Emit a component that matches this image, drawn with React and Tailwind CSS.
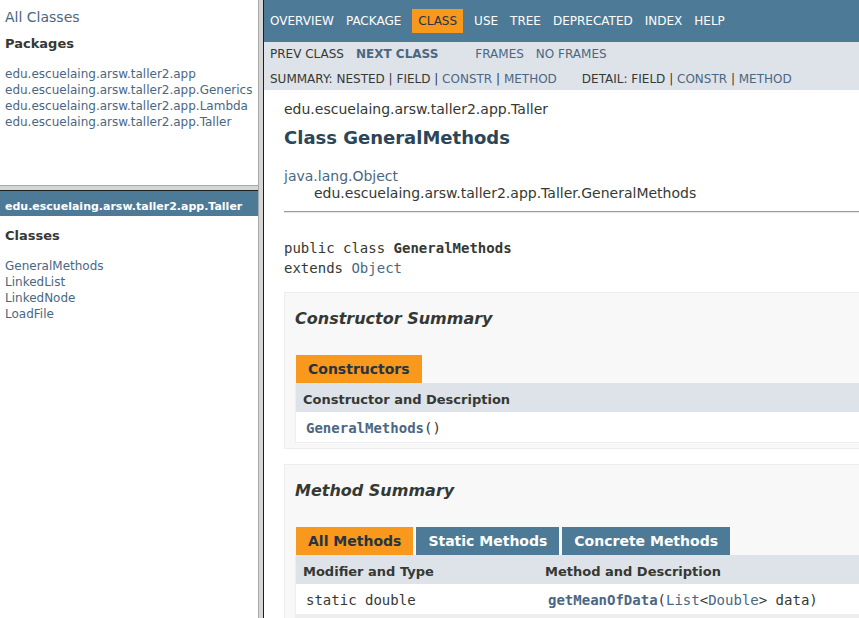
export default function App() {
  return (
    <div className="flex h-[618px] w-[859px] overflow-hidden bg-white font-['DejaVu_Sans',Arial,sans-serif] text-[#353833]">
      {/* Left frames */}
      <div className="flex w-[258px] shrink-0 flex-col">
        <div className="h-[185px] shrink-0 pl-[5px]">
          <div className="pt-[9px] text-[14px] leading-[17px] text-[#4A6782]">All Classes</div>
          <div className="mt-[10px] text-[13px] font-bold leading-[16px]">Packages</div>
          <ul className="mt-[14px] whitespace-nowrap text-[12px] leading-[16px] text-[#4A6782]">
            <li>edu.escuelaing.arsw.taller2.app</li>
            <li>edu.escuelaing.arsw.taller2.app.Generics</li>
            <li>edu.escuelaing.arsw.taller2.app.Lambda</li>
            <li>edu.escuelaing.arsw.taller2.app.Taller</li>
          </ul>
        </div>
        <div className="h-[1px] shrink-0 bg-[#a8a8a8]" />
        <div className="h-[4px] shrink-0 bg-[#d6d6d6]" />
        <div className="h-[1px] shrink-0 bg-[#1e1e1e]" />
        <div className="flex-1">
          <div className="h-[25px] overflow-hidden whitespace-nowrap bg-[#4D7A97] pl-[5px] pt-[9px] text-[11px] font-bold leading-[13px] text-white">
            edu.escuelaing.arsw.taller2.app.Taller
          </div>
          <div className="mt-[12px] pl-[5px] text-[13px] font-bold leading-[16px]">Classes</div>
          <ul className="mt-[14px] pl-[5px] text-[12px] leading-[16px] text-[#4A6782]">
            <li>GeneralMethods</li>
            <li>LinkedList</li>
            <li>LinkedNode</li>
            <li>LoadFile</li>
          </ul>
        </div>
      </div>

      {/* Frame separator */}
      <div className="w-[1px] shrink-0 bg-[#a8a8a8]" />
      <div className="w-[4px] shrink-0 bg-[#d6d6d6]" />
      <div className="w-[1px] shrink-0 bg-[#1e1e1e]" />

      {/* Right frame */}
      <div className="flex-1 overflow-hidden">
        <div className="w-[760px]">
          {/* Top nav */}
          <div className="h-[42px] bg-[#4D7A97] pt-[9px]">
            <ul className="flex text-[12px] leading-[14px] text-white">
              <li className="px-[6px] py-[5px]">OVERVIEW</li>
              <li className="px-[6px] py-[5px]">PACKAGE</li>
              <li className="mx-[5px] bg-[#F8981D] px-[6px] py-[5px] text-[#253441]">CLASS</li>
              <li className="px-[6px] py-[5px]">USE</li>
              <li className="px-[6px] py-[5px]">TREE</li>
              <li className="px-[6px] py-[5px]">DEPRECATED</li>
              <li className="px-[6px] py-[5px]">INDEX</li>
              <li className="px-[6px] py-[5px]">HELP</li>
            </ul>
          </div>

          {/* Sub nav */}
          <div className="h-[48px] bg-[#dee3e9] text-[12px] leading-[14px]">
            <div className="flex">
              <ul className="mr-[25px] flex">
                <li className="px-[6px] py-[5px]">PREV CLASS</li>
                <li className="px-[6px] py-[5px] font-bold text-[#4A6782]">NEXT CLASS</li>
              </ul>
              <ul className="flex text-[#4A6782]">
                <li className="px-[6px] py-[5px]">FRAMES</li>
                <li className="px-[6px] py-[5px]">NO FRAMES</li>
              </ul>
            </div>
            <div className="flex whitespace-pre pl-[6px] pt-[6px]">
              <div className="mr-[25px]">
                SUMMARY: NESTED | FIELD | <span className="text-[#4A6782]">CONSTR</span> | <span className="text-[#4A6782]">METHOD</span>
              </div>
              <div>
                DETAIL: FIELD | <span className="text-[#4A6782]">CONSTR</span> | <span className="text-[#4A6782]">METHOD</span>
              </div>
            </div>
          </div>

          {/* Content */}
          <div className="px-[20px]">
            <div className="mt-[11px] text-[14px] leading-[17px]">edu.escuelaing.arsw.taller2.app.Taller</div>
            <h2 className="mt-[9px] text-[18px] font-bold leading-[22px] text-[#2c4557]">Class GeneralMethods</h2>
            <div className="mt-[19px] text-[14px] leading-[17px]">
              <div className="text-[#4A6782]">java.lang.Object</div>
              <div className="pl-[30px]">edu.escuelaing.arsw.taller2.app.Taller.GeneralMethods</div>
            </div>
            <div className="mt-[9px] h-[2px] border-t border-b border-t-[#9a9a9a] border-b-[#e8e8e8]" />
            <pre className="mt-[25px] font-['DejaVu_Sans_Mono',monospace] text-[14px] leading-[20px]">
              public class <b>GeneralMethods</b>
              {"\n"}extends <span className="text-[#4A6782]">Object</span>
            </pre>

            {/* Constructor summary */}
            <div className="mt-[14px] border border-[#ededed] bg-[#f8f8f8] pb-[5px] pl-[10px] pr-[20px]">
              <h3 className="mt-[15px] text-[16px] font-bold italic leading-[22px]">Constructor Summary</h3>
              <div className="mt-[25px]">
                <div className="flex pl-[1px]">
                  <span className="flex h-[28px] items-center bg-[#F8981D] px-[12px] text-[14px] font-bold text-[#253441]">
                    Constructors
                  </span>
                </div>
                <div className="border-x border-b border-[#eeeeee]">
                  <div className="bg-[#dee3e9] pb-[3px] pl-[7px] pt-[8px] text-[13px] font-bold leading-[18px]">
                    Constructor and Description
                  </div>
                  <div className="bg-white pb-[4px] pl-[10px] pt-[6px] font-['DejaVu_Sans_Mono',monospace] text-[14px] leading-[20px]">
                    <span className="font-bold text-[#4A6782]">GeneralMethods</span>()
                  </div>
                </div>
              </div>
            </div>

            {/* Method summary */}
            <div className="mt-[15px] border border-[#ededed] bg-[#f8f8f8] pb-[5px] pl-[10px] pr-[20px]">
              <h3 className="mt-[15px] text-[16px] font-bold italic leading-[22px]">Method Summary</h3>
              <div className="mt-[25px]">
                <div className="flex pl-[1px] text-[14px] font-bold">
                  <span className="mr-[3px] flex h-[28px] items-center bg-[#F8981D] px-[12px] text-[#253441]">All Methods</span>
                  <span className="mr-[3px] flex h-[28px] items-center bg-[#4D7A97] px-[12px] text-white">Static Methods</span>
                  <span className="mr-[3px] flex h-[28px] items-center bg-[#4D7A97] px-[12px] text-white">Concrete Methods</span>
                </div>
                <div className="border-x border-b border-[#eeeeee]">
                  <div className="flex bg-[#dee3e9] pb-[3px] pt-[8px] text-[13px] font-bold leading-[18px]">
                    <div className="w-[242px] pl-[7px]">Modifier and Type</div>
                    <div className="pl-[7px]">Method and Description</div>
                  </div>
                  <div className="flex bg-white pb-[4px] pt-[6px] font-['DejaVu_Sans_Mono',monospace] text-[14px] leading-[20px]">
                    <div className="w-[242px] pl-[10px]">static double</div>
                    <div className="pl-[10px]">
                      <span className="font-bold text-[#4A6782]">getMeanOfData</span>(<span className="text-[#4A6782]">List</span>&lt;<span className="text-[#4A6782]">Double</span>&gt; data)
                    </div>
                  </div>
                  <div className="h-[30px] bg-[#eeeeef]" />
                </div>
              </div>
            </div>
          </div>
        </div>
      </div>
    </div>
  );
}
